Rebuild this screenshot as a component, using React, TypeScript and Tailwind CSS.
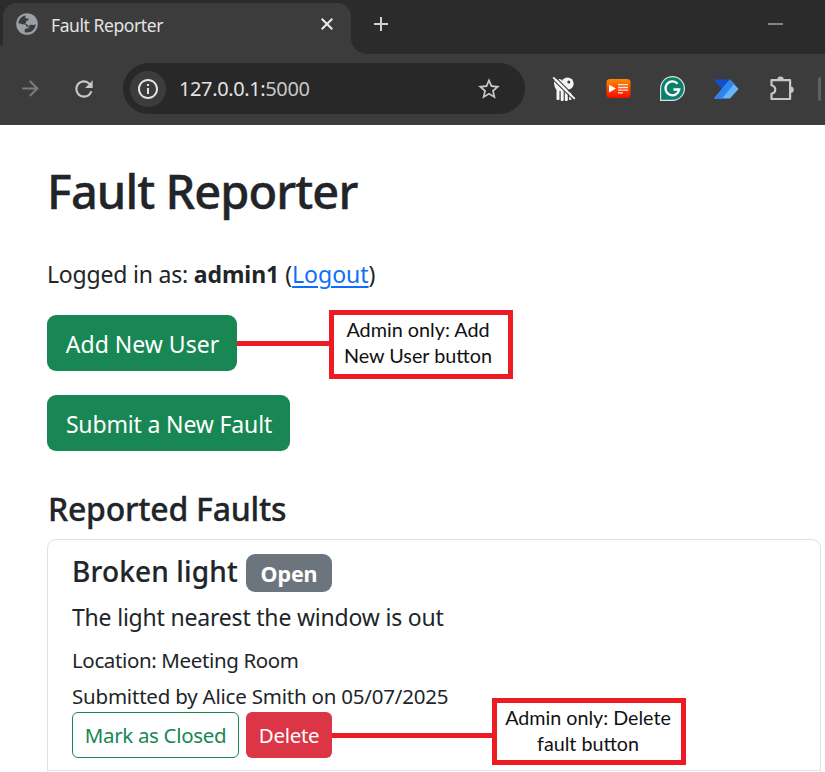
import React from "react";
import { MdAdd, MdArrowForward, MdInfoOutline, MdRefresh, MdStarBorder } from "react-icons/md";

function GlobeIcon() {
  return (
    <svg className="h-[22px] w-[22px] shrink-0" viewBox="0 0 22 22">
      <circle cx="11" cy="11" r="10.8" fill="#9aa0a6" />
      <path d="M2.400 10.200C2.700 6.200 5.600 3.200 9.400 2.500v1.700c0 1.100.7 1.400 1.900 1.400h1.400c0 1.700-.8 2.500-2.500 2.500v1.500c0 1-.8 1.300-2 1.300 2.600 0 4.400.6 4.400 3h-1.800c-.5-2-2-2.600-3.800-2.600-1.600 0-2.200-1.100-4.600-1.100z" fill="#3c3c3c" />
      <path d="M19.600 11c-1 1.200-2.600 1.300-3.800.8-1.200-.4-2 .2-2.600 1.200-.7 1.200-.4 2.500-2 2.500-1.700 0-2.500.6-2.500 2v1.700c5.500 1.500 11-2.400 10.900-8.200z" fill="#3c3c3c" />
    </svg>
  );
}

function CloseIcon() {
  return (
    <svg className="mt-[12px] h-[18px] w-[18px]" viewBox="0 0 18 18">
      <path d="M3.700 3.700l10.600 10.600M14.300 3.700L3.700 14.300" stroke="#e8e8e8" strokeWidth="2.100" />
    </svg>
  );
}

function ForkIcon() {
  return (
    <svg className="h-[26px] w-[24px]" viewBox="0 0 24 26">
      <g fill="#f4f4f4">
        <circle cx="15.500" cy="7.700" r="6.200" />
        <path d="M2 4q2-2 3.500 0q2-2 4 0l4 6v5H8Q1 14 2 4z" />
        <rect x="4.500" y="10" width="3" height="14" rx="1" />
        <rect x="8.700" y="9" width="3" height="16" rx="1" />
        <rect x="12.800" y="12" width="3" height="13" rx="1" />
        <rect x="17" y="16" width="2.600" height="8" rx="1" />
      </g>
      <circle cx="16.800" cy="6" r="1.500" fill="#3c3c3c" />
      <path d="M3.200.8l20 20M.5 3.200l20 20" stroke="#3c3c3c" strokeWidth="1.100" />
      <path d="M1.200 1.300l21.600 21.600" stroke="#f4f4f4" strokeWidth="1.800" />
    </svg>
  );
}

function PlaylistIcon() {
  return (
    <svg className="h-[19px] w-[25px]" viewBox="0 0 25 19">
      <defs>
        <linearGradient id="playlist" x2="0" y2="1">
          <stop stopColor="#ff8a00" />
          <stop offset="1" stopColor="#f50a00" />
        </linearGradient>
      </defs>
      <rect x=".5" width="24" height="19" rx="3.500" fill="url(#playlist)" />
      <path d="M3 5.500v8l7-4z" fill="#fff" />
      <path d="M12 5.700h10M12 8.500h10M12 11.200h10M12 13.800h5" stroke="#ffe4d8" strokeWidth="1.300" />
    </svg>
  );
}

function GrammarIcon() {
  return (
    <svg className="h-[25px] w-[25px]" viewBox="0 0 25 25">
      <path d="M.6 24.400V12.500A11.900 11.900 0 1 1 12.500 24.400z" fill="#0b7f6c" stroke="#d6e3e0" strokeWidth="1.200" />
      <path d="M17.600 7.800A6.900 6.900 0 1 0 19.200 13.500H13.500" fill="none" stroke="#fff" strokeWidth="2.300" />
    </svg>
  );
}

function AutomateIcon() {
  return (
    <svg className="h-[20px] w-[26px]" viewBox="0 0 26 20">
      <path d="M1 .5h16l-8 10z" fill="#124fc9" />
      <path d="M17 .5l8.500 9.500-8.500 9.500H1z" fill="#67b5fb" />
      <path d="M16.800.5l4 4.800L9 19.500H1z" fill="#2f83f3" />
    </svg>
  );
}

function PuzzleIcon() {
  return (
    <svg className="h-[26px] w-[26px]" viewBox="0 0 26 26" fill="none">
      <path d="M2.500 4.200h18.600v18.800H2.500v-5.200c5-1.300 5-7.300 0-8.600z" stroke="#c7c7c7" strokeWidth="2.200" strokeLinejoin="round" />
      <path d="M8.300 3.700a3.200 3.200 0 0 1 6.400 0zM21.500 10.500a3.200 3.200 0 0 1 0 6.400z" fill="#c7c7c7" />
    </svg>
  );
}

function Browser() {
  return (
    <header className="h-[125px] bg-[#3c3c3c]">
      <div className="flex h-[54px] bg-[#3c3c3c]">
        <div className="h-[46px] w-[3px] rounded-br-[8px] bg-[#2b2b2b]" />
        <div className="w-[348px] bg-[#2b2b2b]">
          <div className="flex h-[3px]" />
          <div className="flex h-[51px] items-start rounded-t-[14px] bg-[#3c3c3c] pl-[13px]">
            <div className="pt-[10px]"><GlobeIcon /></div>
            <span className="ml-[13px] w-[267px] whitespace-nowrap pt-[8px] font-['Noto_Sans'] text-[17.5px] leading-[28px] tracking-[-0.42px] text-[#e3e3e3]">Fault Reporter</span>
            <CloseIcon />
          </div>
        </div>
        <div className="flex flex-1 rounded-bl-[16px] bg-[#2b2b2b] pl-[18px]">
          <MdAdd className="mt-[12px] h-[24px] w-[24px] text-[#d0d0d0]" />
          <div className="ml-auto mr-[42px] mt-[23px] h-[2px] w-[15px] bg-[#858585]" />
        </div>
      </div>
      <div className="flex h-[71px] items-center border-b border-[#444041] pb-[1px] pl-[18px]">
        <MdArrowForward className="h-[25px] w-[25px] text-[#7b7b7b]" />
        <MdRefresh className="ml-[28px] h-[26px] w-[26px] text-[#c7c7c7]" />
        <div className="ml-[26px] flex h-[51px] w-[402px] items-center rounded-full bg-[#282828] pl-[7px]">
          <div className="flex h-[36px] w-[36px] items-center justify-center rounded-full bg-[#3c3c3c]">
            <MdInfoOutline className="h-[24px] w-[24px] text-[#e3e3e3]" />
          </div>
          <span className="ml-[13px] w-[297px] whitespace-nowrap font-['Noto_Sans'] text-[20px] leading-[30px] tracking-[-0.38px] text-[#e3e3e3]">127.0.0.1:<span className="text-[#c7c7c7]">5000</span></span>
          <MdStarBorder className="h-[26px] w-[26px] text-[#c7c7c7]" />
        </div>
        <div className="ml-[27px]"><ForkIcon /></div>
        <div className="ml-[30px]"><PlaylistIcon /></div>
        <div className="ml-[29px]"><GrammarIcon /></div>
        <div className="ml-[28px]"><AutomateIcon /></div>
        <div className="ml-[30px]"><PuzzleIcon /></div>
        <div className="ml-[23px] h-[24px] w-[3px] rounded bg-[#606060]" />
      </div>
    </header>
  );
}

export default function App() {
  return (
    <div className="h-[772px] w-[825px] overflow-hidden whitespace-nowrap bg-white font-['Noto_Sans',sans-serif] text-[#212529]">
      <Browser />
      <main className="pl-[47px] pt-[37px]">
        <h1 className="h-[94px] text-[47px] font-medium leading-[58px] tracking-[-0.93px] [-webkit-text-stroke:0.4px_#212529]">Fault Reporter</h1>
        <p className="h-[59px] text-[23px] leading-[36px]">
          <span className="tracking-[-0.2px]">Logged in as: </span>
          <b className="tracking-[-0.05px]">admin1</b> (<a className="text-[#0d6efd] underline decoration-2 underline-offset-[3px]">Logout</a>)
        </p>
        <div className="flex h-[80px] items-start">
          <button className="h-[56px] w-[190px] rounded-[9px] bg-[#198754] pl-[1px] pt-[2px] text-[23px] text-white">Add New User</button>
          <div className="mt-[26px] h-[5px] w-[92px] bg-[#ed1c24]" />
          <div className="relative -mt-[5px] h-[69px] w-[184px] shrink-0 border-[5px] border-[#ed1c24] bg-white pr-[6px] pt-[1px] text-center font-['Lato'] text-[19.800px] leading-[26px] text-[#111]">Admin only: Add<br />New User button</div>
        </div>
        <button className="block h-[56px] w-[243px] rounded-[9px] bg-[#198754] pl-[1px] pt-[2px] text-[23px] tracking-[-0.15px] text-white">Submit a New Fault</button>
        <h2 className="mt-[38px] h-[50px] pl-[1px] text-[32px] font-medium leading-[40px] tracking-[-0.25px] [-webkit-text-stroke:0.3px_#212529]">Reported Faults</h2>
        <ul className="w-[774px]">
          <li className="h-[232px] rounded-t-[9px] border border-[#dee2e6] pl-[24px] pt-[14px]">
            <div className="flex h-[45px]">
              <h3 className="-mt-[1px] w-[174px] text-[28px] font-medium leading-[36px] tracking-[0.15px] [-webkit-text-stroke:0.2px_#212529]">Broken light</h3>
              <span className="h-[38px] w-[86px] rounded-[9px] bg-[#6c757d] pt-[1px] text-center text-[21.500px] font-bold leading-[38px] tracking-[-0.15px] text-white">Open</span>
            </div>
            <p className="h-[46px] text-[23px] leading-[36px] tracking-[-0.2px]">The light nearest the window is out</p>
            <p className="h-[36px] text-[20.500px] leading-[30px] tracking-[-0.37px]">Location: Meeting Room</p>
            <p className="h-[31px] text-[20.500px] leading-[30px] tracking-[-0.21px]">Submitted by Alice Smith on 05/07/2025</p>
            <div className="flex items-start">
              <button className="h-[46px] w-[167px] rounded-[6px] border border-[#198754] text-[20.500px] tracking-[-0.33px] text-[#198754]">Mark as Closed</button>
              <button className="ml-[7px] h-[46px] w-[86px] rounded-[6px] bg-[#dc3545] text-[20.500px] tracking-[-0.3px] text-white">Delete</button>
              <div className="mt-[21px] h-[5px] w-[160px] bg-[#ed1c24]" />
              <div className="relative -mt-[14px] h-[67px] w-[194px] shrink-0 border-[5px] border-[#ed1c24] bg-white pr-[2px] pt-[2px] text-center font-['Lato'] text-[19.700px] leading-[26px] text-[#111]">Admin only: Delete<br />fault button</div>
            </div>
          </li>
          <li className="h-[20px] border-x border-[#dee2e6]" />
        </ul>
      </main>
    </div>
  );
}
